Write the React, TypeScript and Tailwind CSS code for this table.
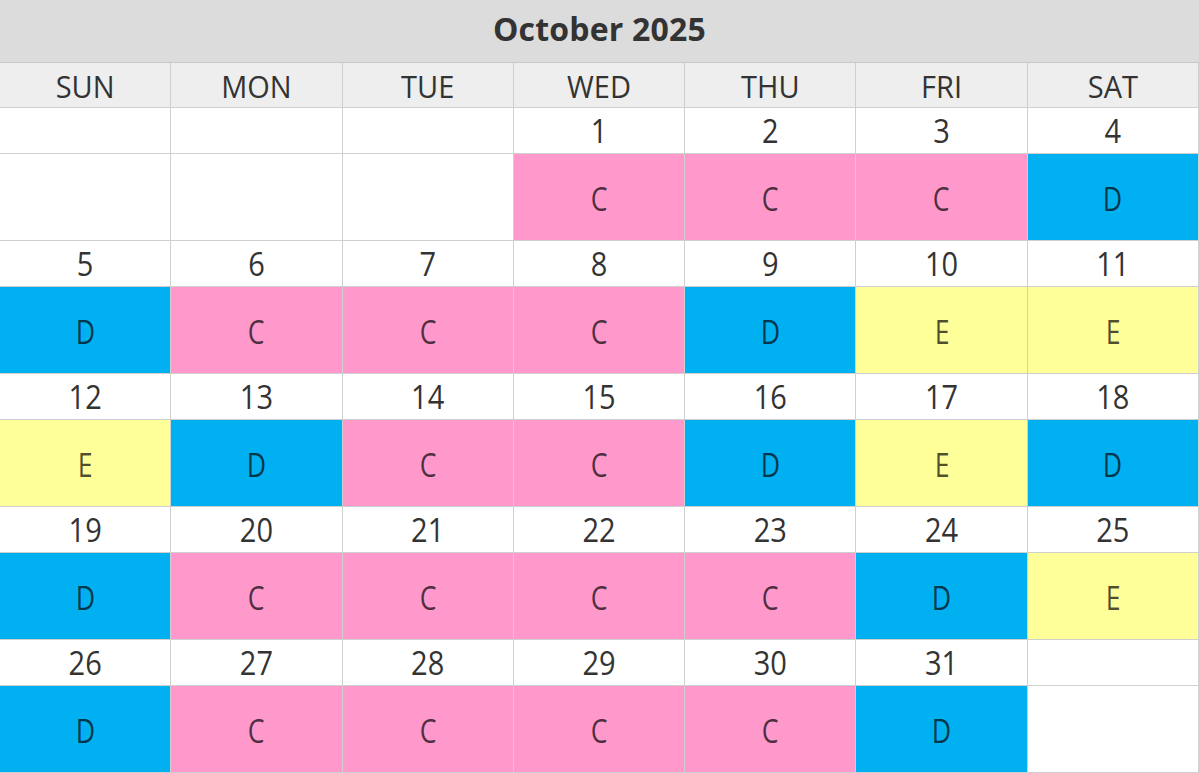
import React from "react";

const days = ["SUN", "MON", "TUE", "WED", "THU", "FRI", "SAT"];

// each week: [date, shift] or null for empty cell
const weeks: ([number, string] | null)[][] = [
  [null, null, null, [1, "C"], [2, "C"], [3, "C"], [4, "D"]],
  [[5, "D"], [6, "C"], [7, "C"], [8, "C"], [9, "D"], [10, "E"], [11, "E"]],
  [[12, "E"], [13, "D"], [14, "C"], [15, "C"], [16, "D"], [17, "E"], [18, "D"]],
  [[19, "D"], [20, "C"], [21, "C"], [22, "C"], [23, "C"], [24, "D"], [25, "E"]],
  [[26, "D"], [27, "C"], [28, "C"], [29, "C"], [30, "C"], [31, "D"], null],
];

const shiftBg: Record<string, string> = {
  C: "bg-[#ff99cc]",
  D: "bg-[#00b0f0]",
  E: "bg-[#ffff99]",
};

export default function App() {
  return (
    <div
      className="w-[1199px] h-[773px] overflow-hidden bg-white text-[#333]"
      style={{ fontFamily: '"Open Sans", "Liberation Sans", sans-serif' }}
    >
      <div className="h-[63px] flex items-center justify-center bg-[#dcdcdc] border-b border-[#c8c8c8]">
        <h1 className="text-[32px] font-bold text-[#333] pb-[5px] tracking-[0.2px]">October 2025</h1>
      </div>
      <div className="grid grid-cols-7">
        {days.map((d) => (
          <div
            key={d}
            className="h-[45px] flex items-center justify-center bg-[#eeeeee] border-r border-b border-[#cfcfcf] text-[29px] leading-none"
          >
            <span className="scale-y-[1.06]">{d}</span>
          </div>
        ))}
        {weeks.map((week, wi) => (
          <React.Fragment key={wi}>
            {week.map((cell, ci) => (
              <div
                key={"d" + wi + ci}
                className="h-[46px] flex items-center justify-center bg-white border-r border-b border-[#cfcfcf] text-[29px] leading-none"
              >
                <span className="scale-y-[1.12]">{cell ? cell[0] : ""}</span>
              </div>
            ))}
            {week.map((cell, ci) => (
              <div
                key={"s" + wi + ci}
                className={
                  "h-[87px] flex items-center justify-center border-r border-b border-[#cfcfcf] text-[29px] leading-none text-black/70 " +
                  (cell ? shiftBg[cell[1]] : "bg-white")
                }
              >
                <span className="scale-y-[1.15] scale-x-[0.92]">{cell ? cell[1] : ""}</span>
              </div>
            ))}
          </React.Fragment>
        ))}
      </div>
    </div>
  );
}
